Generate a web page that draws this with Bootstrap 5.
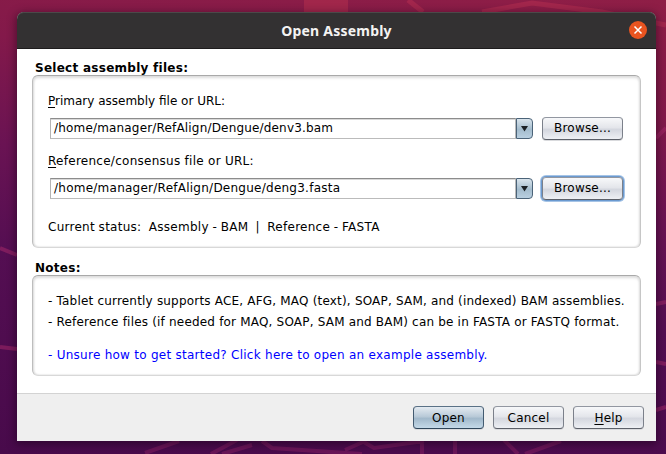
<!DOCTYPE html>
<html lang="en">
<head>
<meta charset="utf-8">
<meta name="viewport" content="width=device-width, initial-scale=1">
<title>Open Assembly</title>
<link href="https://cdn.jsdelivr.net/npm/bootstrap@5.3.0/dist/css/bootstrap.min.css" rel="stylesheet">
<style>
body { width: 666px; height: 454px; font: 12px/16px "DejaVu Sans", sans-serif; color: #000; background: linear-gradient(187deg, #8f1e46 0, #83194a 22%, #6a1353 42%, #540e52 62%, #480a4b 100%); }
.wallpaper { position: absolute; inset: 0; z-index: 0; }
.dialog-window { position: relative; z-index: 1; width: 639px; height: 429px; margin: 12px 0 0 17px; background: #fff; border-radius: 7px 7px 0 0; box-shadow: 0 2px 9px 1px rgba(20,0,20,.5); }
.titlebar { height: 37px; background: #333132; border-radius: 7px 7px 0 0; border-bottom: 1px solid #1e1c1d; box-shadow: inset 0 1px #4b4949; color: #f4f3f2; font: bold 14px/37px "Noto Sans", sans-serif; letter-spacing: .22px; }
.close-button { position: absolute; right: 9px; top: 9px; width: 18px; height: 18px; padding: 0; border: 0; background: none; line-height: 0; }
.dialog-content { height: 344px; padding: 10px 15px 0; }
.section-title { font-weight: bold; height: 16px; line-height: 18px; padding-left: 3px; white-space: nowrap; letter-spacing: .27px; }
.notes-title { margin-top: 11px; line-height: 18px; }
.group-panel { border: 1px solid; border-color: #a9a9a9 #c6c6c6 #d8d8d8 #bdbdbd; border-radius: 6px; box-shadow: inset 0 2px 3px #ddd, inset 1px 0 2px #ddd, inset -1px 0 2px #e2e2e2; padding: 0 15px; white-space: nowrap; }
.files-panel { height: 173px; padding-top: 17px; }
.notes-panel { height: 101px; padding-top: 17px; }
.field-row { height: 24px; margin: 7px 0 13px; padding-left: 2px; }
.path-input { width: 466px; height: 21px; border: 1px solid; border-color: #8c8c8c #b9b9b9 #bbb #b5b5b5; box-shadow: inset 0 1px #d9d9d9; padding: 0 3px; line-height: 19px; letter-spacing: .175px; }
.reference-path { letter-spacing: .25px; }
.reference-label { letter-spacing: .27px; }
.combo-arrow { width: 17px; height: 21px; border: 1px solid #4b6378; border-radius: 0 4px 4px 0; background: linear-gradient(#d9e4ec, #a4bccd 55%, #b9d0e1); padding: 0; line-height: 0; margin-right: 9px; }
.nimbus { height: 23px; padding: 0; border: 1px solid; border-color: #9297a1 #7b808a #5c6069; border-radius: 4px; background: linear-gradient(#f7f8fa, #e4e6eb 45%, #d4d7df 55%, #eef0f4 100%); box-shadow: 0 1px #d9dadd; font: 12px/20px "DejaVu Sans", sans-serif; letter-spacing: .2px; color: #000; }
.browse { width: 81px; }
.focused { box-shadow: 0 0 0 1px #6b9ad0, 0 0 0 2px #a6c4e6; }
.action { width: 71px; }
.primary-action { border-color: #5a7186 #435b70 #2f465a; background: linear-gradient(#e4ebf1, #b9cad8 45%, #a2b9cb 55%, #c4d9e8 100%); }
.mn { text-decoration: underline; text-underline-offset: 2px; text-decoration-thickness: 1px; text-decoration-skip-ink: none; }
.status-line { margin-top: 19px; letter-spacing: .27px; word-spacing: -.42px; }
.note-line { line-height: 16px; margin-bottom: 5px; letter-spacing: .192px; }
.example-link { color: #00f; text-decoration: none; margin-top: 17px; letter-spacing: .265px; }
.dialog-footer { height: 48px; background: #efefef; border-top: 1px solid #d3d3d3; padding: 12px 12px 0 0; gap: 9px; }
</style>
<script src="https://cdn.jsdelivr.net/npm/bootstrap@5.3.0/dist/js/bootstrap.bundle.min.js"></script>
</head>
<body class="overflow-hidden position-relative">
<svg class="wallpaper" width="666" height="454" viewBox="0 0 666 454" fill="none" aria-hidden="true">
<path d="M304 0h44v12h-44z" fill="#ae2d4d" opacity=".65"/>
<path d="M408 0l15 12M482 12l50-9 70 9 64 13" stroke="#b52e50" stroke-width="5" opacity=".55"/>
<path d="M656 138l10-10M656 304l10-2M0 248l17 7M0 347l17 2M656 362l10 2M656 410l10-3" stroke="#a32868" stroke-width="4" opacity=".55"/>
<path d="M145 453l34-12M211 454l26-14M262 441l10 7 90 6M345 450l20-9M362 441l12 7 50-7M422 441v13M455 441v13M504 440l14 14M525 454l36-13M222 454l30-9" stroke="#99256a" stroke-width="4" opacity=".4"/>
</svg>
<main class="dialog-window">
  <header class="titlebar text-center position-relative"><span>Open Assembly</span>
    <button class="close-button" aria-label="Close"><svg width="18" height="18" viewBox="0 0 18 18"><circle cx="9" cy="9" r="9" fill="#e95420"/><path d="M5.500 5.500l7 7M12.500 5.500l-7 7" stroke="#fff" stroke-width="1.500"/></svg></button>
  </header>
  <section class="dialog-content">
    <div class="section-title">Select assembly files:</div>
    <div class="group-panel files-panel">
      <label class="d-block"><span class="mn">P</span>rimary assembly file or URL:</label>
      <div class="field-row d-flex align-items-center"><div class="path-input">/home/manager/RefAlign/Dengue/denv3.bam</div><button class="combo-arrow" aria-label="Recent assemblies"><svg width="7" height="7" viewBox="0 0 7 7"><path d="M0 1h7L3.500 6.500z" fill="#1c2126"/></svg></button><button class="nimbus browse">Browse...</button></div>
      <label class="d-block reference-label"><span class="mn">R</span>eference/consensus file or URL:</label>
      <div class="field-row d-flex align-items-center"><div class="path-input reference-path">/home/manager/RefAlign/Dengue/deng3.fasta</div><button class="combo-arrow" aria-label="Recent references"><svg width="7" height="7" viewBox="0 0 7 7"><path d="M0 1h7L3.500 6.500z" fill="#1c2126"/></svg></button><button class="nimbus browse focused">Browse...</button></div>
      <div class="status-line">Current status: &nbsp;Assembly - BAM &nbsp;|&nbsp; Reference - FASTA</div>
    </div>
    <div class="section-title notes-title">Notes:</div>
    <div class="group-panel notes-panel">
      <div class="note-line">- Tablet currently supports ACE, AFG, MAQ (text), SOAP, SAM, and (indexed) BAM assemblies.</div>
      <div class="note-line">- Reference files (if needed for MAQ, SOAP, SAM and BAM) can be in FASTA or FASTQ format.</div>
      <a class="example-link d-block" href="#">- Unsure how to get started? Click here to open an example assembly.</a>
    </div>
  </section>
  <footer class="dialog-footer d-flex justify-content-end">
    <button class="nimbus action primary-action">Open</button><button class="nimbus action">Cancel</button><button class="nimbus action"><span class="mn">H</span>elp</button>
  </footer>
</main>
</body>
</html>
